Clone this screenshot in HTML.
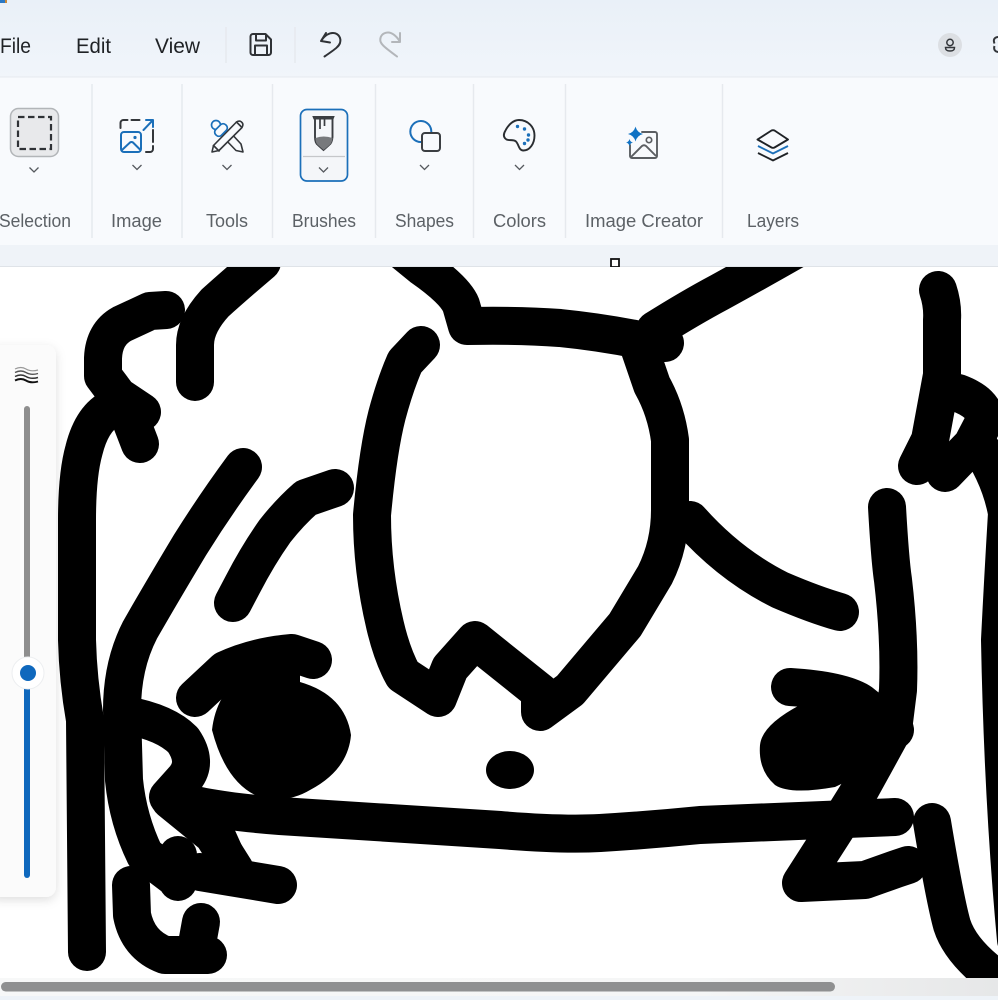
<!DOCTYPE html>
<html><head><meta charset="utf-8"><style>
html,body{margin:0;padding:0;width:998px;height:1000px;overflow:hidden;background:#fff}
svg{display:block}
text{font-family:"Liberation Sans",sans-serif}
.m{font-size:21px;fill:#1f2225}
.l{font-size:18px;fill:#5c6166}
.ic{fill:none;stroke:#33363a;stroke-width:2;stroke-linecap:round;stroke-linejoin:round}
.b{fill:none;stroke:#1b6fb9;stroke-width:2;stroke-linecap:round;stroke-linejoin:round}
.ch{fill:none;stroke:#55595e;stroke-width:1.3}
.dv{stroke:#e6e9ee;stroke-width:1.5}
.s{fill:none;stroke:#000;stroke-width:38;stroke-linecap:round;stroke-linejoin:round}
</style></head><body>
<svg width="998" height="1000" viewBox="0 0 998 1000" xmlns="http://www.w3.org/2000/svg">
<defs>
<clipPath id="cv"><rect x="0" y="267" width="998" height="711"/></clipPath>
<linearGradient id="top" x1="0" y1="0" x2="0" y2="1"><stop offset="0" stop-color="#e9f0f8"/><stop offset="1" stop-color="#f1f5fa"/></linearGradient>
<linearGradient id="sb" x1="0" y1="0" x2="1" y2="0"><stop offset="0" stop-color="#f7f8f8"/><stop offset=".7" stop-color="#f5f6f6"/><stop offset="1" stop-color="#e6e7e8"/></linearGradient>
<filter id="sh" x="-50%" y="-10%" width="200%" height="120%"><feDropShadow dx="0" dy="3" stdDeviation="5" flood-color="#000" flood-opacity=".13"/></filter>
</defs>

<rect width="998" height="77" fill="url(#top)"/>
<rect y="77" width="998" height="168" fill="#f8fafd"/>
<rect y="76.500" width="998" height="1" fill="#e6e9ee"/>
<rect y="245" width="998" height="22" fill="#eff3f8"/>
<rect y="266" width="998" height="1" fill="#dfe3e8"/>
<rect x="0" y="0" width="5" height="3" fill="#2a78c5"/><rect x="5" y="0" width="2" height="3" fill="#c98a3d"/>

<text class="m" x="0" y="53" textLength="31" lengthAdjust="spacingAndGlyphs">File</text>
<text class="m" x="76" y="53" textLength="35" lengthAdjust="spacingAndGlyphs">Edit</text>
<text class="m" x="155" y="53" textLength="45" lengthAdjust="spacingAndGlyphs">View</text>
<line class="dv" x1="226" y1="27" x2="226" y2="63"/><line class="dv" x1="295" y1="27" x2="295" y2="63"/>

<g fill="none" stroke="#2f3236" stroke-width="2" stroke-linejoin="round">
<path d="M253 34h12.500l5.500 5.500v13a2.500 2.500 0 0 1-2.500 2.500h-15.500a2.500 2.500 0 0 1-2.500-2.500v-16a2.500 2.500 0 0 1 2.500-2.500z"/>
<path d="M256 34v6.500h10v-6.500M255 55v-9.500h12v9.500"/></g>
<path d="M326 33l-5 8 9 1.500M321.500 40.500c3-5 8-8 12-7.500 5 .5 8 5 6.500 10-1 3-3 5-15.500 13.500" fill="none" stroke="#2f3236" stroke-width="2" stroke-linecap="round" stroke-linejoin="round"/>
<path d="M400 33v9h-8M399.500 41c-3-5-8-9-12-8.500-5 .5-8 4-7 9 1 3 3 5 16.500 15" fill="none" stroke="#b3b6ba" stroke-width="2" stroke-linecap="round" stroke-linejoin="round"/>

<circle cx="950" cy="45" r="12" fill="#dcdfe3"/>
<circle cx="950" cy="42.500" r="3.200" fill="none" stroke="#33363a" stroke-width="1.500"/>
<path d="M945.500 47.500h9c0 3-2 3.500-4.500 3.500s-4.500-.5-4.500-3.500z" fill="none" stroke="#33363a" stroke-width="1.500"/>
<path d="M999 37c-5 0-6 3-4.500 6.500M999 52c-4.500 0-5.500-3-4.500-6" fill="none" stroke="#33363a" stroke-width="2"/>

<g class="dv"><line x1="92" y1="84" x2="92" y2="238"/><line x1="182" y1="84" x2="182" y2="238"/><line x1="272.500" y1="84" x2="272.500" y2="238"/><line x1="375.500" y1="84" x2="375.500" y2="238"/><line x1="473.500" y1="84" x2="473.500" y2="238"/><line x1="565.500" y1="84" x2="565.500" y2="238"/><line x1="722.500" y1="84" x2="722.500" y2="238"/></g>

<text class="l" x="-1" y="227" textLength="72" lengthAdjust="spacingAndGlyphs">Selection</text>
<text class="l" x="111" y="227" textLength="51" lengthAdjust="spacingAndGlyphs">Image</text>
<text class="l" x="206" y="227" textLength="42" lengthAdjust="spacingAndGlyphs">Tools</text>
<text class="l" x="292" y="227" textLength="64" lengthAdjust="spacingAndGlyphs">Brushes</text>
<text class="l" x="395" y="227" textLength="59" lengthAdjust="spacingAndGlyphs">Shapes</text>
<text class="l" x="493" y="227" textLength="53" lengthAdjust="spacingAndGlyphs">Colors</text>
<text class="l" x="585" y="227" textLength="118" lengthAdjust="spacingAndGlyphs">Image Creator</text>
<text class="l" x="747" y="227" textLength="52" lengthAdjust="spacingAndGlyphs">Layers</text>

<!-- Selection -->
<rect x="10.500" y="108.500" width="48" height="48" rx="8" fill="#e8e9eb" stroke="#b2b5b8" stroke-width="1.500"/>
<rect x="18" y="117" width="33" height="32" fill="none" stroke="#2f3236" stroke-width="2.200" stroke-dasharray="6.500 3.500"/>
<path class="ch" d="M29.500 167.500l4.500 4.500 4.500-4.500"/>

<!-- Image -->
<path class="ic" d="M120.500 128v-5a3 3 0 0 1 3-3h4M131.500 120h8M153 130v12M153 146v3a3 3 0 0 1-3 3h-4"/>
<path class="b" d="M143.500 130l9.500-10M146 120h7v7"/>
<rect class="b" x="121" y="132" width="20" height="20" rx="3"/>
<path class="b" d="M122 150l8-7.500q1.500-1 3 0l7.500 7.500"/>
<circle cx="135" cy="137.500" r="1.600" fill="#1b6fb9"/>
<path class="ch" d="M132.500 165l4.500 4.500 4.500-4.500"/>

<!-- Tools -->
<path class="ic" style="stroke-width:1.600" d="M229 131l12 13 2 8-7-1.500-12-12.500"/>
<path class="ic" style="stroke-width:1.600;fill:#f8fafd" d="M212 152l1.500-6.500 22.500-23q3-2.500 5.500-.5t.5 5.500l-23 23z"/>
<path class="ic" style="stroke-width:1.600" d="M213.500 145.500l5.500 5.500M236.500 122l5 5"/>
<circle cx="216" cy="125" r="4.500" fill="#f8fafd" stroke="#1b6fb9" stroke-width="1.700"/>
<rect x="214" y="126" width="14" height="8" rx="3.500" transform="rotate(-45 221 130)" fill="#f8fafd" stroke="#1b6fb9" stroke-width="1.700"/>
<path class="ch" d="M222.500 165l4.500 4.500 4.500-4.500"/>

<!-- Brushes -->
<rect x="300.500" y="109.500" width="47" height="71.500" rx="6.500" fill="#f4f6f9" stroke="#1b6fb9" stroke-width="1.700"/>
<line x1="303" y1="156.500" x2="345" y2="156.500" stroke="#c5c7ca" stroke-width="1.200"/>
<path d="M313 116.500h21l-1 2.500h-19z" fill="#3a3d41" stroke="#3a3d41"/>
<path d="M315 118v19q0 6 3 8l5.500 5 5.500-5q3-2 3.500-8v-19" fill="none" stroke="#3a3d41" stroke-width="1.900"/>
<path d="M315.500 138q8-3 17 0q-.5 5-3 7l-5.800 5-5.800-5q-2.400-2-2.400-7z" fill="#77797c"/>
<path d="M320 119v10M324.500 119v7" stroke="#3a3d41" stroke-width="1.700"/>
<path class="ch" d="M319 167.500l4.500 4.500 4.500-4.500"/>

<!-- Shapes -->
<path class="b" d="M431.300 132A10.500 10.500 0 1 0 421 142"/>
<rect x="422" y="133" width="18" height="18" rx="3" fill="#f8fafd" stroke="#3b3e42" stroke-width="2"/>
<path class="ch" d="M420 165l4.500 4.500 4.500-4.500"/>

<!-- Colors -->
<path d="M519 120c9 0 15.500 7 15.500 15.500s-5 15-11 15c-5 0-4.500-6-7.500-9-3-2.500-6-.5-9.500-2-3-2-3.500-5-1-9 3-6 8-10.500 13.500-10.500z" fill="none" stroke="#2a2d31" stroke-width="1.900"/>
<g fill="#1b6fb9"><circle cx="517.500" cy="126.500" r="1.700"/><circle cx="524.500" cy="129" r="1.700"/><circle cx="528.500" cy="135" r="1.700"/><circle cx="528" cy="140" r="1.700"/><circle cx="524.500" cy="143.500" r="1.700"/></g>
<path class="ch" d="M515 165l4.500 4.500 4.500-4.500"/>

<!-- Image Creator -->
<path d="M642 132h13a2 2 0 0 1 2 2v22a2 2 0 0 1-2 2h-23a2 2 0 0 1-2-2v-11" fill="none" stroke="#5b5e62" stroke-width="1.900" stroke-linecap="round"/>
<path d="M631 157l11-11q2-1.500 4 0l10 10" fill="none" stroke="#5b5e62" stroke-width="1.900"/>
<circle cx="649" cy="140" r="2.700" fill="none" stroke="#5b5e62" stroke-width="1.700"/>
<path d="M635.500 126.500q1.500 6 7.500 7.500q-6 1.500-7.500 7.500q-1.500-6-7.500-7.500q6-1.500 7.500-7.500z" fill="#0f72c4"/>
<path d="M629.500 139q.8 3 3.500 3.500q-2.700.5-3.500 3.500q-.8-3-3.500-3.500q2.700-.5 3.500-3.500z" fill="#0f72c4"/>

<!-- Layers -->
<path d="M757.500 139.500l14-9q1.500-.7 3 0l13.500 9-13.500 8q-1.500.7-3 0z" fill="none" stroke="#1f2226" stroke-width="1.900" stroke-linejoin="round"/>
<path d="M758 146l15 7.500 15-7.500" fill="none" stroke="#1b6fb9" stroke-width="1.900"/>
<path d="M758 153l15 7.500 15-7.500" fill="none" stroke="#1f2226" stroke-width="1.900"/>

<!-- Handle -->
<rect x="611" y="259" width="8" height="8" fill="#fff" stroke="#111" stroke-width="1.800"/>

<!-- Canvas -->
<g clip-path="url(#cv)">
<rect y="267" width="998" height="711" fill="#fff"/>
<path class="s" d="M395 245L422 267Q455 290 461 305L467 326Q520 325 560 328Q600 332 640 340L665 343"/>
<path class="s" d="M655 330Q690 308 720 292Q760 270 795 250"/>
<path class="s" d="M166 310L150 311L122 324Q104 334 103 358V376L118 396L142 412"/>
<path class="s" d="M125 405L140 444"/>
<path class="s" d="M195 382V345Q195 325 215 303Q235 285 262 262"/>
<path class="s" d="M112 408Q92 418 84 450Q77 475 77 520V640Q78 680 85 720L87 952"/>
<path class="s" d="M243 467Q215 505 190 545Q160 595 140 630Q122 665 122 710L124 780Q128 820 145 855L178 880"/>
<path class="s" d="M335 488L306 498Q290 512 275 531Q258 555 243 584L233 603"/>
<path class="s" d="M421 345L405 362Q395 385 387 415Q378 450 372 515Q372 570 385 625Q392 655 403 675L438 698L450 668L475 640L540 692V712L570 690L625 625L655 575Q670 545 670 510V440Q666 410 652 385L640 350"/>
<path class="s" d="M690 520Q730 565 780 590Q815 605 840 612"/>
<path class="s" d="M938 290Q943 305 942 320V375L930 440L917 466"/>
<path class="s" d="M958 393Q985 403 985 420L972 445L945 473"/>
<path class="s" d="M975 440Q1000 475 1007 513Q1003 580 1000 640Q1003 800 1016 940"/>
<path class="s" d="M887 507Q890 560 893 580Q900 640 898 690L893 730"/>
<path class="s" d="M195 698L225 670Q255 656 292 653L313 660"/>
<path d="M212 730Q214 712 222 698L240 670L300 665V682Q345 695 351 735Q348 770 310 790Q285 805 255 795Q225 780 212 730Z" fill="#000"/>
<path class="s" d="M125 715Q165 722 183 740Q198 762 185 778L168 797Q200 810 280 816L500 830Q560 835 600 833Q650 830 700 825L895 817"/>
<path class="s" d="M170 800L213 835L235 870"/>
<path class="s" d="M205 810L232 870"/>
<path class="s" d="M178 855V882"/>
<path class="s" d="M200 872L230 877L278 885"/>
<path class="s" d="M131 885L132 915Q138 945 165 955H208"/>
<path class="s" d="M201 922L195 955"/>
<path class="s" d="M790 687Q840 690 860 702L895 730"/>
<path d="M760 745Q762 725 800 705L880 715L870 770L835 787Q790 795 775 785Q758 770 760 745Z" fill="#000"/>
<path class="s" d="M893 730L860 790L835 830L801 883L865 880L896 869L908 865"/>
<path class="s" d="M932 822Q945 900 952 925Q960 950 992 975"/>
<ellipse cx="510" cy="770" rx="24" ry="19" fill="#000"/>
</g>

<!-- Scrollbar -->
<rect y="978" width="998" height="18" fill="url(#sb)"/>
<rect y="996" width="998" height="4" fill="#eef3f8"/>
<rect x="1" y="982" width="834" height="9.500" rx="4.700" fill="#8f9091"/>

<!-- Slider -->
<rect x="-12" y="345" width="68" height="552" rx="10" fill="#fbfbfb" filter="url(#sh)"/>
<g fill="none">
<path d="M15 369q6-3 11 0t12 1" stroke="#999" stroke-width="1.200"/>
<path d="M15 372.500q6-3 11 0t12 1" stroke="#555" stroke-width="1.400"/>
<path d="M15 376.500q6-3 11 0t12 1" stroke="#333" stroke-width="1.500"/>
<path d="M15 380.500q6-3 11 0t12 1" stroke="#111" stroke-width="1.900"/>
</g>
<rect x="24" y="406" width="6" height="260" rx="3" fill="#8e8e8e"/>
<rect x="24" y="680" width="6" height="198" rx="3" fill="#0f68bd"/>
<circle cx="28" cy="673" r="16" fill="#fff" stroke="#eceef0" stroke-width="1"/>
<circle cx="28" cy="673" r="8" fill="#0f68bd"/>
</svg>
</body></html>
